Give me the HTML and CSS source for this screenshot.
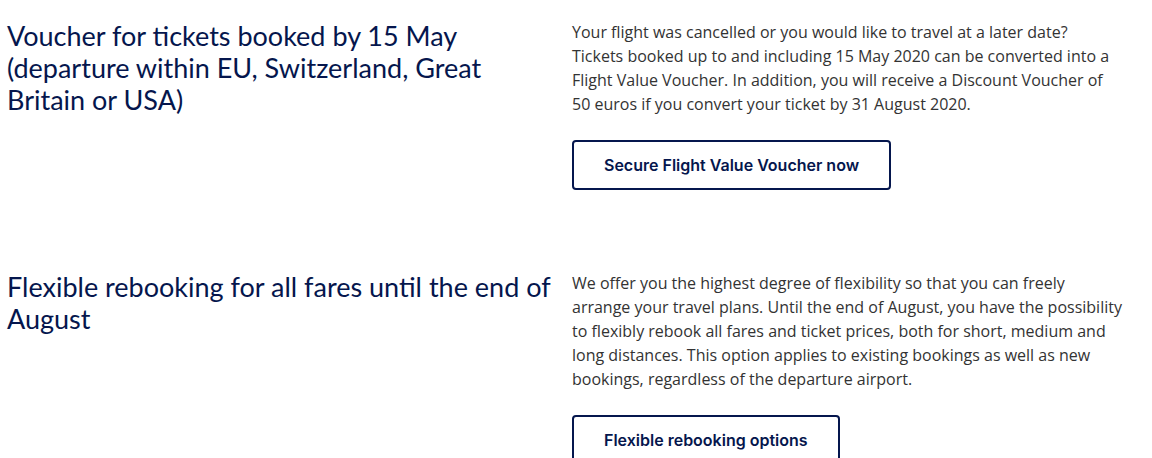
FILE: index.html
```html
<!DOCTYPE html>
<html lang="en">
<head>
    <meta charset="UTF-8">
    <title>Travel vouchers and rebooking</title>
    <link rel="stylesheet" href="styles.css">
</head>
<body>

<div class="offer">
    <h2 class="offer-title">Voucher for tickets booked by 15 May (departure within EU, Switzerland, Great Britain or USA)</h2>
    <div class="offer-body">
        <p>Your flight was cancelled or you would like to travel at a later date?<br>
        Tickets booked up to and including 15 May 2020 can be converted into a Flight Value Voucher. In addition, you will receive a Discount Voucher of 50 euros if you convert your ticket by 31 August 2020.</p>
        <a href="#" class="btn">Secure Flight Value Voucher now</a>
    </div>
</div>

<div class="offer">
    <h2 class="offer-title">Flexible rebooking for all fares until the end of August</h2>
    <div class="offer-body">
        <p>We offer you the highest degree of flexibility so that you can freely arrange your travel plans. Until the end of August, you have the possibility to flexibly rebook all fares and ticket prices, both for short, medium and long distances. This option applies to existing bookings as well as new bookings, regardless of the departure airport.</p>
        <a href="#" class="btn">Flexible rebooking options</a>
    </div>
</div>

</body>
</html>
```
FILE: styles.css
```css
body {
    font-family: "Open Sans", Arial, sans-serif;
    margin: 0;
    padding: 0 0 0 7px;
    color: #05164d;
    background-color: #fff;
}

.offer {
    display: grid;
    grid-template-columns: 565px 551px;
    padding-top: 20px;
    margin-bottom: 61px;
}

.offer-title {
    font-family: Lato, Arial, sans-serif;
    font-size: 27px;
    font-weight: 400;
    line-height: 32px;
    margin: 0;
    padding-right: 10px;
}

.offer-body p {
    font-size: 16px;
    line-height: 24px;
    color: #333;
    margin: 0 0 24px;
}

.btn {
    display: inline-block;
    font-family: Inter, Arial, sans-serif;
    font-size: 16px;
    font-weight: 600;
    color: #05164d;
    text-decoration: none;
    border: 2px solid #05164d;
    border-radius: 4px;
    padding: 13px 30px;
}
```
